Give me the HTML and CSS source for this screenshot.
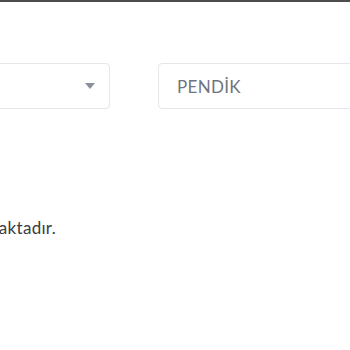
FILE: index.html
```html
<!DOCTYPE html>
<html lang="tr">
<head>
<meta charset="utf-8">
<link rel="stylesheet" href="styles.css">
</head>
<body>
<div class="topbar"></div>
<div class="page">
  <div class="fields">
    <div class="field select">
      <span class="value"></span>
      <span class="caret"></span>
    </div>
    <div class="field">
      <span class="value">PENDİK</span>
    </div>
  </div>
  <div class="note-wrap">
    <p class="note">Seçilen bölgede şubemiz bulunmaktadır.</p>
  </div>
</div>
</body>
</html>
```
FILE: styles.css
```css
html, body {
  margin: 0;
  padding: 0;
  background: #ffffff;
  font-family: "Lato", "Noto Sans", sans-serif;
  overflow: hidden;
}
.topbar {
  height: 2px;
  background: #4d4d4d;
}
.page {
  padding-top: 61px;
}
.fields {
  display: flex;
  gap: 48px;
  margin-left: -100px;
}
.field {
  box-sizing: border-box;
  width: 210px;
  height: 46px;
  border: 1px solid #e4e6ea;
  border-radius: 4px;
  display: flex;
  align-items: center;
  padding: 0 18px;
  flex-shrink: 0;
}
.select {
  justify-content: space-between;
}
.value {
  font-size: 17px;
  color: #6f7580;
  letter-spacing: 0.3px;
}
.caret {
  width: 0;
  height: 0;
  border-left: 5px solid transparent;
  border-right: 5px solid transparent;
  border-top: 6px solid #8a9099;
  margin-right: -4px;
}
.note-wrap {
  width: 600px;
  margin-left: -544px;
  margin-top: 108px;
}
.note {
  margin: 0;
  text-align: right;
  white-space: nowrap;
  font-size: 17px;
  letter-spacing: 0.3px;
  color: #3a3d42;
}
```
